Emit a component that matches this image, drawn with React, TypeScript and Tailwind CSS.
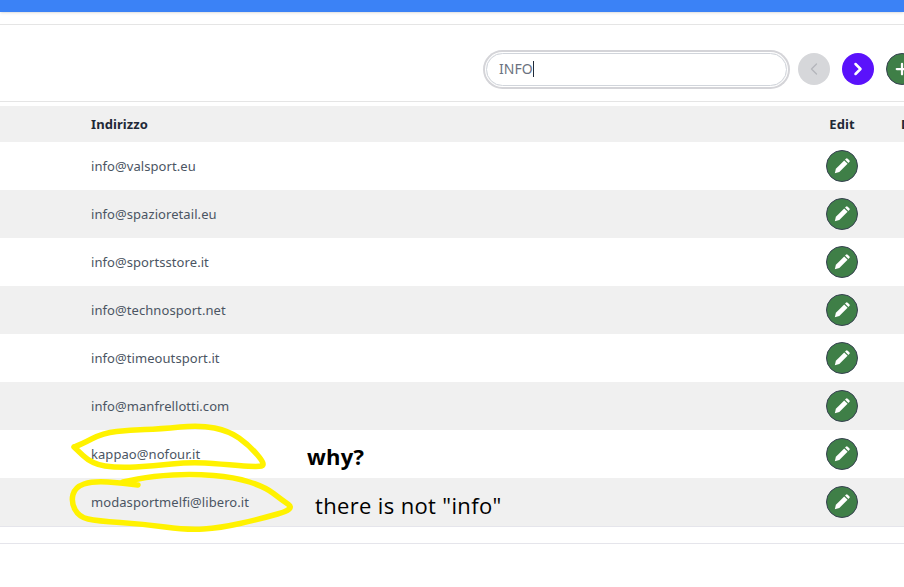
import { ChevronLeft, ChevronRight, Plus } from "lucide-react";

const rows = [
  "info@valsport.eu",
  "info@spazioretail.eu",
  "info@sportsstore.it",
  "info@technosport.net",
  "info@timeoutsport.it",
  "info@manfrellotti.com",
  "kappao@nofour.it",
  "modasportmelfi@libero.it",
];

// hand drawn circles, traced from the picture
const scribbleOne: [number, number][] = [
  [74, 447], [80, 445], [103, 433], [130, 430], [160, 429], [200, 425], [229, 431], [249, 445], [266, 465],
  [257, 467], [220, 464], [190, 462], [153, 466], [118, 468], [92, 464], [74, 447],
];
const scribbleTwo: [number, number][] = [
  [138, 485], [123, 483], [93, 481], [75, 487], [71, 502], [79, 517], [97, 521], [143, 524], [187, 530],
  [220, 528], [260, 519], [295, 509], [282, 500], [265, 487], [234, 477], [193, 474], [153, 476], [123, 482],
];

function smooth(points: [number, number][]) {
  let d = `M${points[0][0]} ${points[0][1]}`;
  for (let i = 1; i < points.length - 1; i++) {
    const mx = (points[i][0] + points[i + 1][0]) / 2;
    const my = (points[i][1] + points[i + 1][1]) / 2;
    d += ` Q${points[i][0]} ${points[i][1]} ${mx} ${my}`;
  }
  const last = points[points.length - 1];
  return `${d} L${last[0]} ${last[1]}`;
}

function EditButton() {
  return (
    <button className="flex h-8 w-8 items-center justify-center rounded-full border border-[#374151] bg-[#3f7f47] text-white">
      <svg viewBox="0 0 16 16" className="h-4 w-4" fill="currentColor" aria-hidden="true">
        <path d="M0.8 15.2 L1.9 10.7 L10.2 2.4 L13.6 5.8 L5.3 14.1 Z" />
        <path d="M11 1.6 L11.9 .7 a1.3 1.3 0 0 1 1.8 0 L15.3 2.3 a1.3 1.3 0 0 1 0 1.8 L14.4 5 Z" />
      </svg>
    </button>
  );
}

export default function App() {
  return (
    <div className="relative h-[587px] w-[904px] overflow-hidden bg-white font-['Noto_Sans',sans-serif] text-[#4b5563]">
      <div className="h-3 bg-[#3b82f6] shadow-sm" />
      <div className="mt-3 flex h-[78px] items-center border-y border-[#e5e5e5] pl-[486px] pt-3">
        <div className="flex h-[33px] w-[301px] shrink-0 items-center rounded-full border border-[#d1d5db] pl-3 text-sm text-[#6b7280] shadow-[0_0_0_1px_#fff,0_0_0_3px_#d4d4d8]">
          INFO<span className="h-[16px] w-px bg-[#1f2937]" />
        </div>
        <button className="ml-[11px] flex h-8 w-8 shrink-0 items-center justify-center rounded-full bg-[#d6d7da] text-[#b4b6bb]">
          <ChevronLeft size={20} strokeWidth={1.6} />
        </button>
        <button className="ml-3 flex h-8 w-8 shrink-0 items-center justify-center rounded-full bg-[#5a12fb] text-white">
          <ChevronRight size={20} strokeWidth={3} />
        </button>
        <button className="ml-3 flex h-8 w-8 shrink-0 items-center justify-center rounded-full border border-[#374151] bg-[#3f7f47] text-white">
          <Plus size={18} strokeWidth={3} />
        </button>
      </div>

      <div className="mt-1 flex h-9 items-center bg-[#f0f0f0] pt-[2px] text-[13px] font-bold tracking-[0.08px] text-[#1f2937]">
        <div className="w-[826px] shrink-0 pl-[91px]">Indirizzo</div>
        <div className="w-8 shrink-0 text-center">Edit</div>
        <div className="ml-[43px] shrink-0">Delete</div>
      </div>

      {rows.map((email, i) => (
        <div key={email} className={`flex h-12 items-center text-[13px] tracking-[0.07px] ${i % 2 === 1 ? "bg-[#f0f0f0]" : "bg-white"}`}>
          <div className="w-[826px] shrink-0 pl-[91px] pt-[2px]">{email}</div>
          <EditButton />
        </div>
      ))}
      <div className="h-[18px] border-y border-[#e5e5eb]" />

      {/* scribbles drawn on top of the screenshot */}
      <svg className="pointer-events-none absolute left-0 top-0" width="904" height="587" fill="none" stroke="#fff200" strokeWidth="5.5" strokeLinecap="round" strokeLinejoin="round">
        <path d={smooth(scribbleOne)} />
        <path d={smooth(scribbleTwo)} />
      </svg>
      <div className="absolute left-[307px] top-[441px] font-['Open_Sans',sans-serif] text-[22px] font-bold leading-[30px] tracking-[0.2px] text-black">why?</div>
      <div className="absolute left-[315px] top-[490px] font-['Open_Sans',sans-serif] text-[22px] leading-[30px] tracking-[0.35px] text-black">there is not "info"</div>
    </div>
  );
}
